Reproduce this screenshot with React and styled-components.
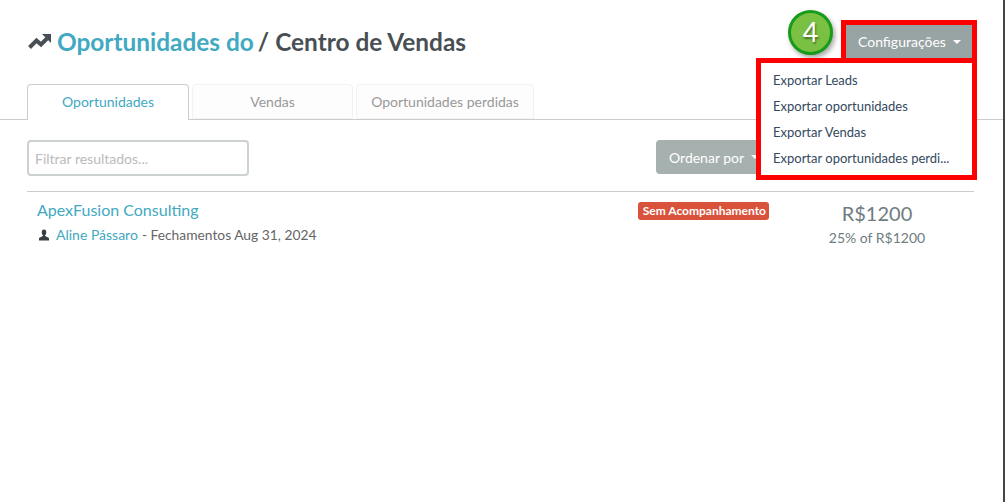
import React from 'react';
import styled, { createGlobalStyle } from 'styled-components';

const GlobalStyle = createGlobalStyle`
  html, body {
    margin: 0;
    padding: 0;
    background: #fff;
    font-family: "Lato", "Liberation Sans", sans-serif;
  }
  *, *::before { box-sizing: border-box; }
`;

const Page = styled.div`
  width: 1005px;
  height: 502px;
  border-right: 2px solid #4a4341;
  overflow: hidden;
  background: #fff;
`;

const Header = styled.div`
  display: flex;
  justify-content: space-between;
  align-items: flex-start;
  padding: 20px 31px 0 27px;
  height: 84px;
`;

const Title = styled.h1`
  margin: 8px 0 0;
  display: flex;
  align-items: center;
  font-size: 24.4px;
  line-height: 28px;
  font-weight: 700;
  color: #484f54;
  white-space: nowrap;
`;

const TitleLink = styled.span`
  color: #41a9c1;
  margin: 0 4px 0 6px;
`;

const Actions = styled.div`
  position: relative;
  width: 127px;
`;

const Badge = styled.div`
  position: absolute;
  left: -57px;
  top: -10px;
  width: 45px;
  height: 45px;
  border-radius: 50%;
  background: #7ac143;
  border: 3px solid #189a1a;
  box-shadow: 2px 3px 5px rgba(0, 0, 0, 0.35);
  color: #fff;
  font-size: 27px;
  line-height: 38px;
  text-align: center;
  text-shadow: 1px 2px 2px rgba(0, 0, 0, 0.4);
`;

const SettingsButton = styled.div`
  display: flex;
  align-items: center;
  gap: 7px;
  height: 33px;
  margin-top: 5px;
  padding-left: 13px;
  background: #98a3a3;
  color: #fff;
  font-size: 14px;
`;

const Caret = styled.span`
  display: inline-block;
  width: 0;
  height: 0;
  border-left: 4px solid transparent;
  border-right: 4px solid transparent;
  border-top: 4px solid #fff;
`;

const Menu = styled.div`
  position: absolute;
  z-index: 2;
  right: -5px;
  top: 38px;
  width: 221px;
  height: 122px;
  padding: 4px 0 0 12px;
  background: #fff;
  border: 5px solid #ff0000;
  &::before {
    content: '';
    position: absolute;
    right: -5px;
    top: -43px;
    width: 136px;
    height: 43px;
    border: 5px solid #ff0000;
    border-bottom: 0;
  }
`;

const MenuItem = styled.div`
  height: 26px;
  line-height: 26px;
  font-size: 13px;
  color: #34495e;
  white-space: nowrap;
`;

const Tabs = styled.div`
  display: flex;
  gap: 3px;
  height: 36px;
  padding-left: 27px;
  border-bottom: 1px solid #ccc;
`;

const Tab = styled.div`
  width: ${p => p.$width}px;
  height: ${p => (p.$active ? 36 : 35)}px;
  border: 1px solid ${p => (p.$active ? '#ccc' : '#f2f2f2')};
  border-bottom: ${p => (p.$active ? '0' : '1px solid #f2f2f2')};
  border-radius: 4px 4px 0 0;
  background: ${p => (p.$active ? '#fff' : '#fdfdfd')};
  color: ${p => (p.$active ? '#41a9c1' : '#999')};
  font-size: 14px;
  line-height: 34px;
  text-align: center;
`;

const Filters = styled.div`
  display: flex;
  justify-content: space-between;
  align-items: flex-start;
  padding: 20px 31px 0 27px;
  height: 71px;
`;

const Search = styled.input`
  width: 222px;
  height: 36px;
  padding: 0 6px;
  border: 2px solid #ccd1d1;
  border-radius: 4px;
  outline: none;
  font-family: inherit;
  font-size: 14px;
  &::placeholder { color: #bbb; opacity: 1; }
`;

const SortButton = styled.div`
  display: flex;
  align-items: center;
  gap: 7px;
  width: 120px;
  height: 34px;
  padding-left: 13px;
  border-radius: 4px;
  background: #a6b0ae;
  color: #fff;
  font-size: 14px;
  margin-right: 196px;
`;

const Row = styled.div`
  display: flex;
  margin: 0 29px 0 27px;
  padding: 8px 0 0 10px;
  border-top: 1px solid #ccc;
`;

const RowMain = styled.div`
  flex: 1;
`;

const CompanyName = styled.div`
  color: #41a9c1;
  font-size: 16px;
  line-height: 20px;
`;

const OwnerLine = styled.div`
  display: flex;
  align-items: center;
  margin-top: 5px;
  padding-left: 2px;
  font-size: 14px;
  line-height: 20px;
  color: #666;
  white-space: nowrap;
`;

const OwnerName = styled.span`
  color: #41a9c1;
  margin: 0 4px 0 7px;
`;

const CloseDate = styled.span`
  font-size: 13.8px;
`;

const StatusLabel = styled.span`
  align-self: flex-start;
  margin: 2px 11px 0 0;
  padding: 0 3px 0 5px;
  height: 18px;
  border-radius: 3px;
  background: #d9533c;
  color: #fff;
  font-size: 12px;
  font-weight: 700;
  line-height: 17px;
  white-space: nowrap;
`;

const Amount = styled.div`
  width: 194px;
  text-align: center;
  color: #6f7c80;
`;

const AmountValue = styled.div`
  font-size: 20px;
  line-height: 26px;
`;

const AmountNote = styled.div`
  font-size: 14px;
  line-height: 18px;
  margin-top: 3px;
`;

function TrendIcon() {
  return (
    <svg width="24" height="16" viewBox="0 0 24 16">
      <path d="M2.5 13.5 L9.5 6.5 L14 10.5 L20 4.5" fill="none" stroke="#484f54" strokeWidth="4" />
      <path d="M15 0 L24 0 L24 9 Z" fill="#484f54" />
    </svg>
  );
}

function UserIcon() {
  return (
    <svg width="10" height="12" viewBox="0 0 11 12" fill="#3a3f42">
      <path d="M5.5 0 C7.3 0 8 1.3 8 3 C8 4.4 7.4 5.6 6.8 6.2 L6.8 7.2 L11 9.2 L11 12 L0 12 L0 9.2 L4.2 7.2 L4.2 6.2 C3.6 5.6 3 4.4 3 3 C3 1.3 3.7 0 5.5 0 Z" />
    </svg>
  );
}

export default function App() {
  return (
    <Page>
      <GlobalStyle />
      <Header>
        <Title>
          <TrendIcon />
          <TitleLink>Oportunidades do</TitleLink>/ Centro de Vendas
        </Title>
        <Actions>
          <Badge>4</Badge>
          <SettingsButton>Configurações <Caret /></SettingsButton>
          <Menu>
            <MenuItem>Exportar Leads</MenuItem>
            <MenuItem>Exportar oportunidades</MenuItem>
            <MenuItem>Exportar Vendas</MenuItem>
            <MenuItem>Exportar oportunidades perdi...</MenuItem>
          </Menu>
        </Actions>
      </Header>
      <Tabs>
        <Tab $active $width={162}>Oportunidades</Tab>
        <Tab $width={161}>Vendas</Tab>
        <Tab $width={178}>Oportunidades perdidas</Tab>
      </Tabs>
      <Filters>
        <Search placeholder="Filtrar resultados..." />
        <SortButton>Ordenar por <Caret /></SortButton>
      </Filters>
      <Row>
        <RowMain>
          <CompanyName>ApexFusion Consulting</CompanyName>
          <OwnerLine>
            <UserIcon />
            <OwnerName>Aline Pássaro</OwnerName>
            <CloseDate>- Fechamentos Aug 31, 2024</CloseDate>
          </OwnerLine>
        </RowMain>
        <StatusLabel>Sem Acompanhamento</StatusLabel>
        <Amount>
          <AmountValue>R$1200</AmountValue>
          <AmountNote>25% of R$1200</AmountNote>
        </Amount>
      </Row>
    </Page>
  );
}
